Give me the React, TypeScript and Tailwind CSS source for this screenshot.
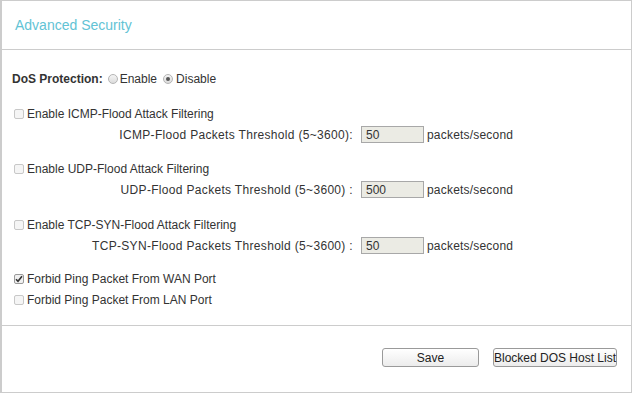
import React from 'react';

const Radio = ({ checked }: { checked?: boolean }) => (
  <span className="inline-flex h-[10px] w-[10px] items-center justify-center rounded-full border border-[#b5b5b5] bg-gradient-to-b from-[#f4f4f4] to-[#dcdcdc]">
    {checked && <span className="h-[4px] w-[4px] rounded-full bg-[#555]" />}
  </span>
);

const Check = ({ checked }: { checked?: boolean }) => (
  <span
    className={`inline-flex h-[10px] w-[10px] items-center justify-center rounded-[2px] border ${
      checked ? 'border-[#9a9a9a] bg-[#f0f0f0]' : 'border-[#c8c8c8] bg-[#f5f5f5]'
    }`}
  >
    {checked && (
      <svg width="8" height="8" viewBox="0 0 8 8">
        <path d="M1 4.2 L3 6.3 L7 1.3" fill="none" stroke="#333" strokeWidth="1.6" />
      </svg>
    )}
  </span>
);

const CheckRow = ({ label, checked }: { label: string; checked?: boolean }) => (
  <div className="flex h-[21px] items-center">
    <span className="ml-[2px] mr-[3px] flex">
      <Check checked={checked} />
    </span>
    <span>{label}</span>
  </div>
);

const ThresholdRow = ({ label, value }: { label: string; value: string }) => (
  <div className="flex h-[21px] items-center">
    <span className="w-[341px] whitespace-nowrap text-right tracking-[0.32px]">{label}</span>
    <span className="ml-[8px] flex h-[17px] w-[63px] items-center border border-[#a8a8a8] bg-[#ebebe4] pl-[4px] text-[#333]">
      {value}
    </span>
    <span className="ml-[3px] tracking-[0.2px]">packets/second</span>
  </div>
);

const FILTERS = [
  { check: 'Enable ICMP-Flood Attack Filtering', label: 'ICMP-Flood Packets Threshold (5~3600):', value: '50', mt: 'mt-[14px]' },
  { check: 'Enable UDP-Flood Attack Filtering', label: 'UDP-Flood Packets Threshold (5~3600) :', value: '500', mt: 'mt-[13px]' },
  { check: 'Enable TCP-SYN-Flood Attack Filtering', label: 'TCP-SYN-Flood Packets Threshold (5~3600) :', value: '50', mt: 'mt-[14px]' },
];

export default function App() {
  return (
    <div className="h-[393px] w-[632px] border border-l-2 border-[#cccccc] bg-white font-['Liberation_Sans',Arial,sans-serif] text-[12px] text-[#333]">
      {/* header */}
      <div className="flex h-[49px] items-center border-b border-[#cccccc] pl-[13px]">
        <h1 className="text-[14px] text-[#62c3d5]">Advanced Security</h1>
      </div>

      {/* settings */}
      <div className="h-[275px] pl-[10px] pt-[18px]">
        <div className="flex h-[21px] items-center">
          <span className="font-bold">DoS Protection:</span>
          <span className="ml-[5px] mr-[2px] flex">
            <Radio />
          </span>
          <span>Enable</span>
          <span className="ml-[6px] mr-[3px] flex">
            <Radio checked />
          </span>
          <span>Disable</span>
        </div>

        {FILTERS.map((f) => (
          <div key={f.check} className={f.mt}>
            <CheckRow label={f.check} />
            <ThresholdRow label={f.label} value={f.value} />
          </div>
        ))}

        <div className="mt-[12px]">
          <CheckRow label="Forbid Ping Packet From WAN Port" checked />
          <CheckRow label="Forbid Ping Packet From LAN Port" />
        </div>
      </div>

      {/* actions */}
      <div className="flex h-[67px] justify-end gap-[14px] border-t border-[#cccccc] pr-[14px] pt-[22px]">
        <button className="h-[19px] w-[97px] whitespace-nowrap rounded-[3px] border border-[#9a9a9a] bg-gradient-to-b from-white to-[#ececec] px-0 text-[12px] text-[#222]">
          Save
        </button>
        <button className="h-[19px] w-[124px] whitespace-nowrap rounded-[3px] border border-[#9a9a9a] bg-gradient-to-b from-white to-[#ececec] px-0 text-[12px] text-[#222]">
          Blocked DOS Host List
        </button>
      </div>
    </div>
  );
}
